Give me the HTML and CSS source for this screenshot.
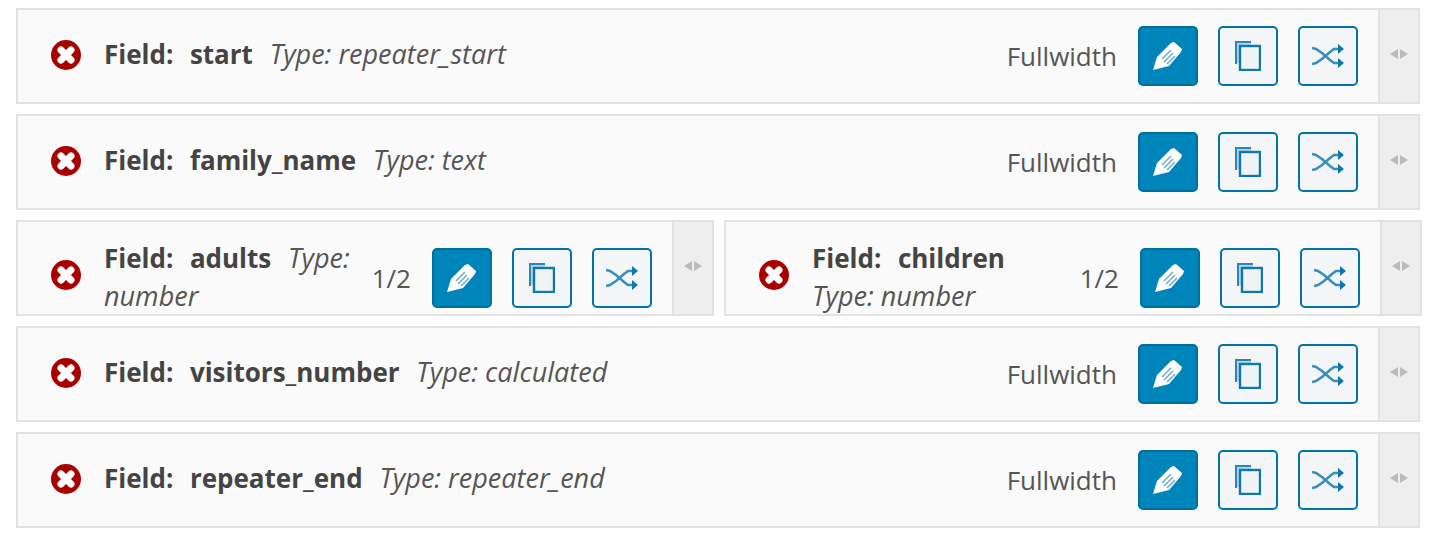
FILE: index.html
```html
<!DOCTYPE html>
<html>
<head>
	<meta charset="UTF-8">
	<title>Fields</title>
	<link rel="stylesheet" href="styles.css">
</head>
<body>
	<svg class="defs" width="0" height="0">
		<symbol id="i-error" viewBox="0 0 30 30">
			<circle cx="15" cy="15" r="15" fill="#a90000"/>
			<path d="M10 10l10 10M20 10l-10 10" stroke="#fff" stroke-width="7" stroke-linecap="round"/>
		</symbol>
		<symbol id="i-edit" viewBox="0 0 30 30">
			<path d="M0 29L4 16 18 2l3-1 8 7-1 3-12 14z" fill="#fff"/>
			<path d="M9 18l9-9M11 21l9-9M14 23l8-8" stroke="#6aaccd" stroke-width="1.5" fill="none"/>
		</symbol>
		<symbol id="i-copy" viewBox="0 0 26 30">
			<path d="M1 22V1h15v4H5v17z" fill="#b8d3e2"/>
			<path d="M1 23V1h15" fill="none" stroke="#2a86b4" stroke-width="2"/>
			<rect x="5" y="5" width="20" height="24" fill="#eef3f6" stroke="#0f78ab" stroke-width="2.4"/>
		</symbol>
		<symbol id="i-shuffle" viewBox="0 0 32 26">
			<path d="M0 5l4 1 6 4 8 7 4 3h5M0 21l4-1 6-4 8-7 4-3h5" fill="none" stroke="#3a8fba" stroke-width="2.6"/>
			<path d="M26 1l6 5-6 5zM26 15l6 5-6 5z" fill="#0f78ab"/>
		</symbol>
		<symbol id="i-handle" viewBox="0 0 18 10">
			<path d="M8 0v10L0 5zM10 0v10l8-5z" fill="#bbb"/>
		</symbol>
	</svg>

	<div class="fields">
		<div class="field">
			<div class="main">
				<svg class="err"><use href="#i-error"/></svg>
				<div class="info"><strong>Field:&nbsp; start</strong> <em>Type: repeater_start</em></div>
				<span class="size">Fullwidth</span>
				<a class="btn primary"><svg class="ic-edit"><use href="#i-edit"/></svg></a>
				<a class="btn"><svg class="ic-copy"><use href="#i-copy"/></svg></a>
				<a class="btn"><svg class="ic-shuffle"><use href="#i-shuffle"/></svg></a>
			</div>
			<div class="handle"><svg><use href="#i-handle"/></svg></div>
		</div>

		<div class="field">
			<div class="main">
				<svg class="err"><use href="#i-error"/></svg>
				<div class="info"><strong>Field:&nbsp; family_name</strong> <em>Type: text</em></div>
				<span class="size">Fullwidth</span>
				<a class="btn primary"><svg class="ic-edit"><use href="#i-edit"/></svg></a>
				<a class="btn"><svg class="ic-copy"><use href="#i-copy"/></svg></a>
				<a class="btn"><svg class="ic-shuffle"><use href="#i-shuffle"/></svg></a>
			</div>
			<div class="handle"><svg><use href="#i-handle"/></svg></div>
		</div>

		<div class="half-row">
			<div class="field half">
				<div class="main">
					<svg class="err"><use href="#i-error"/></svg>
					<div class="info"><strong>Field:&nbsp; adults</strong> <em>Type:</em> <em>number</em></div>
					<span class="size">1/2</span>
					<a class="btn primary"><svg class="ic-edit"><use href="#i-edit"/></svg></a>
					<a class="btn"><svg class="ic-copy"><use href="#i-copy"/></svg></a>
					<a class="btn"><svg class="ic-shuffle"><use href="#i-shuffle"/></svg></a>
				</div>
				<div class="handle"><svg><use href="#i-handle"/></svg></div>
			</div>
			<div class="field half">
				<div class="main">
					<svg class="err"><use href="#i-error"/></svg>
					<div class="info"><strong>Field:&nbsp; children</strong> <em>Type: number</em></div>
					<span class="size">1/2</span>
					<a class="btn primary"><svg class="ic-edit"><use href="#i-edit"/></svg></a>
					<a class="btn"><svg class="ic-copy"><use href="#i-copy"/></svg></a>
					<a class="btn"><svg class="ic-shuffle"><use href="#i-shuffle"/></svg></a>
				</div>
				<div class="handle"><svg><use href="#i-handle"/></svg></div>
			</div>
		</div>

		<div class="field">
			<div class="main">
				<svg class="err"><use href="#i-error"/></svg>
				<div class="info"><strong>Field:&nbsp; visitors_number</strong> <em>Type: calculated</em></div>
				<span class="size">Fullwidth</span>
				<a class="btn primary"><svg class="ic-edit"><use href="#i-edit"/></svg></a>
				<a class="btn"><svg class="ic-copy"><use href="#i-copy"/></svg></a>
				<a class="btn"><svg class="ic-shuffle"><use href="#i-shuffle"/></svg></a>
			</div>
			<div class="handle"><svg><use href="#i-handle"/></svg></div>
		</div>

		<div class="field">
			<div class="main">
				<svg class="err"><use href="#i-error"/></svg>
				<div class="info"><strong>Field:&nbsp; repeater_end</strong> <em>Type: repeater_end</em></div>
				<span class="size">Fullwidth</span>
				<a class="btn primary"><svg class="ic-edit"><use href="#i-edit"/></svg></a>
				<a class="btn"><svg class="ic-copy"><use href="#i-copy"/></svg></a>
				<a class="btn"><svg class="ic-shuffle"><use href="#i-shuffle"/></svg></a>
			</div>
			<div class="handle"><svg><use href="#i-handle"/></svg></div>
		</div>
	</div>
</body>
</html>
```

FILE: styles.css
```css
* {
	box-sizing: border-box;
}

body {
	margin: 0;
	padding: 8px 16px 0;
	background: #fff;
	font-family: "Open Sans", sans-serif;
	font-size: 26px;
	line-height: 38px;
	color: #555;
	overflow: hidden;
}

.defs {
	display: block;
	height: 0;
}

.fields {
	display: flex;
	flex-direction: column;
	gap: 10px;
	width: 1404px;
}

.field {
	display: flex;
	height: 96px;
	background: #fafafa;
	border: 2px solid #e2e2e2;
}

.half-row {
	display: flex;
	gap: 10px;
	width: 1406px;
}

.half {
	flex: 0 0 698px;
}

.main {
	display: flex;
	flex: 1;
	align-items: center;
	align-self: flex-start;
	min-height: 60px;
	margin-top: 16px;
	padding-left: 33px;
	padding-right: 20px;
}

.half .main {
	min-height: 80px;
}

.err {
	flex: none;
	width: 30px;
	height: 30px;
	margin-right: 23px;
	margin-bottom: 3px;
}

.half .err {
	margin-bottom: 6px;
}

.info {
	flex: 1;
	margin-bottom: 4px;
	color: #444;
}

.half .info {
	margin-bottom: 2px;
	padding-right: 10px;
}

.info strong {
	margin-right: 10px;
	font-weight: 700;
	word-spacing: 1.5px;
}

.info em {
	font-size: 27px;
	color: #555;
}

.size {
	margin-right: 21px;
}

.btn {
	display: flex;
	flex: none;
	align-items: center;
	justify-content: center;
	width: 60px;
	height: 60px;
	margin-left: 20px;
	background: #f3f5f6;
	border: 2px solid #0073aa;
	border-radius: 5px;
}

.size + .btn {
	margin-left: 0;
}

.btn.primary {
	background: #0085ba;
	border-color: #006f9f;
}

.ic-edit {
	width: 30px;
	height: 30px;
}

.ic-copy {
	width: 26px;
	height: 30px;
}

.ic-shuffle {
	width: 32px;
	height: 26px;
}

.handle {
	display: flex;
	flex: none;
	align-items: center;
	justify-content: center;
	width: 40px;
	padding-bottom: 5px;
	background: #eee;
	border-left: 2px solid #e2e2e2;
}

.handle svg {
	width: 18px;
	height: 10px;
}
```
